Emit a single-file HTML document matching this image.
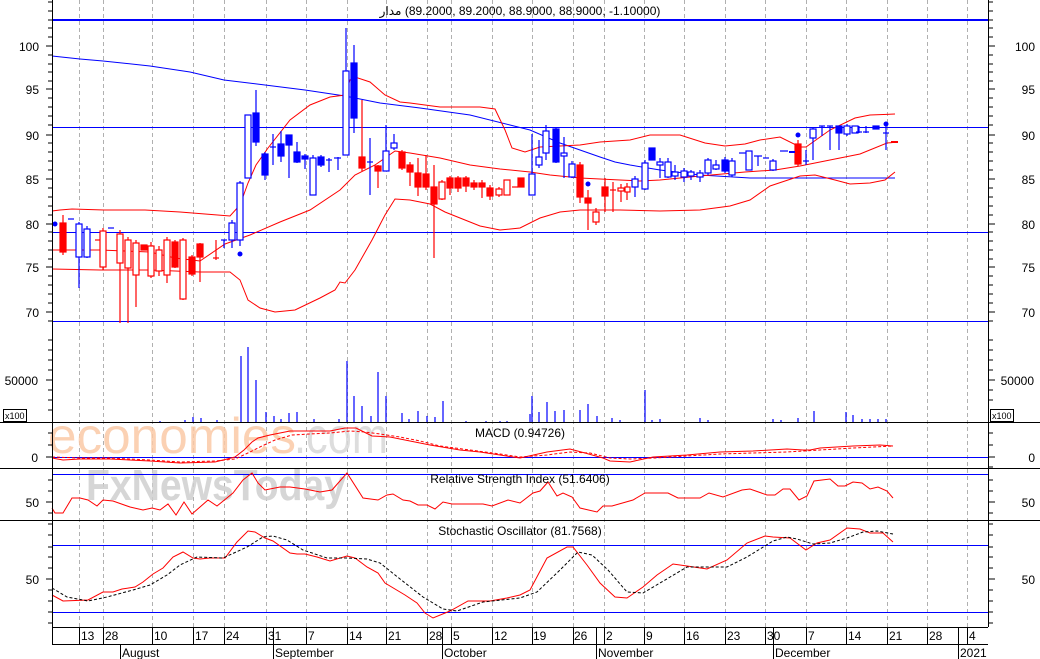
<!DOCTYPE html>
<html><head><meta charset="utf-8"><style>
html,body{margin:0;padding:0;background:#fff;}
svg{display:block;font-family:"Liberation Sans","DejaVu Sans",sans-serif;}
</style></head><body>
<svg width="1040" height="659" viewBox="0 0 1040 659" xmlns="http://www.w3.org/2000/svg">
<rect width="1040" height="659" fill="#fff"/>
<g stroke="#b0b0b0" stroke-dasharray="4,3" stroke-width="1">
<path d="M79.5 0V627M103.5 0V627M152.5 0V627M193.5 0V627M224.5 0V627M266.5 0V627M306.5 0V627M347.5 0V627M386.5 0V627M427.5 0V627M451.5 0V627M492.5 0V627M532.5 0V627M573.5 0V627M604.5 0V627M644.5 0V627M684.5 0V627M725.5 0V627M765.5 0V627M806.5 0V627M846.5 0V627M887.5 0V627M927.5 0V627M967.5 0V627"/>
</g>
<text x="48" y="453" font-size="50" fill="#fbc9a6" opacity="0.85" textLength="248" lengthAdjust="spacingAndGlyphs">economies</text>
<text x="294" y="453" font-size="50" fill="#d8d8d8" opacity="0.85" textLength="94" lengthAdjust="spacingAndGlyphs">.com</text>
<text x="86" y="500" font-size="44" font-weight="bold" fill="#cfcfcf" opacity="0.85" textLength="260" lengthAdjust="spacingAndGlyphs">FxNewsToday</text>
<g stroke="#0000ff" fill="none">
<path d="M52 20H988" stroke-width="2"/>
<path d="M52 127.5H988M52 232.5H988M52 321.5H988M52 457.5H988M52 474.5H988M52 545.5H988M52 612.5H988"/>
</g>
<polyline fill="none" stroke="#0000ff" points="52,56 80,59 103,61 150,66 190,72 224,80 265,85 305,90 345,96 380,103 420,108 470,115 510,125 530,130 560,143 580,150 600,157 615,162 630,165 660,170 700,175 750,178 806,178 850,178 895,178"/>
<g fill="none" stroke="#ff0000">
<polyline points="52,211 60,210 72,209 104,210 145,210 180,212 205,214 230,216 240,205 248,183 256,165 268,148 290,120 310,105 330,97 345,95 350,80 355,77 370,82 385,95 400,102 410,103 440,107 480,107 495,109 505,130 512,148 525,152 540,147 580,145 600,142 630,140 650,135 680,135 705,143 725,146 745,144 760,140 780,137 800,147 806,147 830,130 855,118 870,115 895,114"/>
<polyline points="52,250 100,250 150,252 175,258 200,261 225,244 250,235 280,222 310,210 340,190 355,175 375,165 395,151 410,153 440,158 470,165 500,169 530,172 550,175 580,178 620,180 640,181 660,180 700,176 745,172 775,170 800,166 830,160 860,154 887,143 898,142"/>
<polyline points="52,269 100,270 150,270 200,272 230,272 240,280 248,300 260,308 275,312 295,310 320,298 335,290 340,282 345,283 355,270 372,240 385,215 395,199 410,200 430,204 445,212 465,220 480,226 500,230 520,228 540,218 560,212 580,210 620,210 660,211 700,210 730,206 750,200 770,186 800,176 815,175 835,180 850,184 870,183 885,180 895,172"/>
</g>
<g stroke-width="1.2">
<g stroke="#ff0000" fill="#ff0000">
<line x1="63" y1="215" x2="63" y2="255"/><rect x="60" y="223" width="6" height="29"/>
<line x1="95" y1="240" x2="101" y2="240"/>
<line x1="103" y1="228" x2="103" y2="270"/><rect x="100" y="231" width="6" height="36" fill="#fff"/>
<line x1="120" y1="230" x2="120" y2="323"/><rect x="117" y="234" width="6" height="29" fill="#fff"/>
<line x1="128" y1="237" x2="128" y2="323"/><rect x="125" y="240" width="6" height="28" fill="#fff"/>
<line x1="136" y1="240" x2="136" y2="307"/><rect x="133" y="243" width="6" height="32" fill="#fff"/>
<rect x="141" y="245" width="6" height="5"/>
<line x1="151" y1="242" x2="151" y2="278"/><rect x="148" y="246" width="6" height="30" fill="#fff"/>
<line x1="159" y1="246" x2="159" y2="276"/><rect x="156" y="250" width="6" height="21" fill="#fff"/>
<line x1="167" y1="237" x2="167" y2="283"/><rect x="164" y="240" width="6" height="35" fill="#fff"/>
<line x1="175" y1="240" x2="175" y2="268"/><rect x="172" y="242" width="6" height="25"/>
<line x1="183" y1="238" x2="183" y2="300"/><rect x="180" y="240" width="6" height="59" fill="#fff"/>
<line x1="192" y1="255" x2="192" y2="276"/><rect x="189" y="257" width="6" height="17"/>
<line x1="200" y1="243" x2="200" y2="282"/><rect x="197" y="244" width="6" height="13"/>
<line x1="213" y1="258" x2="219" y2="258"/><line x1="216" y1="240" x2="216" y2="260"/>
<line x1="362" y1="100" x2="362" y2="171"/><rect x="359" y="157" width="6" height="11"/>
<line x1="378" y1="165" x2="378" y2="188"/><rect x="375" y="166" width="6" height="5"/>
<line x1="402" y1="150" x2="402" y2="170"/><rect x="399" y="152" width="6" height="16"/>
<line x1="410" y1="162" x2="410" y2="186"/><rect x="407" y="165" width="6" height="7"/>
<line x1="418" y1="158" x2="418" y2="196"/><rect x="415" y="173" width="6" height="14"/>
<line x1="426" y1="155" x2="426" y2="190"/><rect x="423" y="174" width="6" height="13"/>
<line x1="434" y1="165" x2="434" y2="258"/><rect x="431" y="187" width="6" height="17"/>
<line x1="442" y1="180" x2="442" y2="200"/><rect x="439" y="182" width="6" height="17" fill="#fff"/>
<line x1="450" y1="176" x2="450" y2="195"/><rect x="447" y="178" width="6" height="10"/>
<line x1="458" y1="176" x2="458" y2="192"/><rect x="455" y="178" width="6" height="10"/>
<line x1="466" y1="176" x2="466" y2="192"/><rect x="463" y="178" width="6" height="8"/>
<line x1="474" y1="180" x2="474" y2="190"/><rect x="471" y="183" width="6" height="4"/>
<line x1="482" y1="180" x2="482" y2="198"/><rect x="479" y="183" width="6" height="4"/>
<line x1="490" y1="185" x2="490" y2="200"/><rect x="487" y="188" width="6" height="8"/>
<line x1="499" y1="187" x2="499" y2="197"/><rect x="496" y="189" width="6" height="6" fill="#fff"/>
<rect x="504" y="180" width="6" height="15" fill="#fff"/>
<line x1="512" y1="187" x2="518" y2="187"/>
<rect x="518" y="178" width="6" height="9"/>
<line x1="580" y1="162" x2="580" y2="203"/><rect x="577" y="165" width="6" height="32"/>
<line x1="588" y1="190" x2="588" y2="230"/><rect x="585" y="198" width="6" height="5"/>
<line x1="596" y1="208" x2="596" y2="225"/><rect x="593" y="212" width="6" height="10" fill="#fff"/>
<line x1="605" y1="178" x2="605" y2="212"/><rect x="602" y="187" width="6" height="9"/>
<line x1="613" y1="182" x2="613" y2="212"/><line x1="610" y1="190" x2="616" y2="190"/>
<line x1="621" y1="184" x2="621" y2="202"/><rect x="618" y="188" width="6" height="3" fill="#fff"/>
<line x1="627" y1="183" x2="627" y2="200"/><rect x="625" y="187" width="5" height="5" fill="#fff"/>
<line x1="798" y1="140" x2="798" y2="166"/><rect x="795" y="144" width="6" height="20"/>
<line x1="891" y1="142" x2="898" y2="142" stroke-width="2"/>
</g>
<g stroke="#0000ff" fill="#0000ff">
<line x1="79" y1="222" x2="79" y2="288"/><rect x="76" y="224" width="6" height="33" fill="#fff"/>
<line x1="87" y1="226" x2="87" y2="258"/><rect x="84" y="229" width="6" height="28" fill="#fff"/>
<line x1="68" y1="219" x2="74" y2="219"/><line x1="108" y1="228" x2="114" y2="228"/>
<line x1="224" y1="240" x2="224" y2="248"/><line x1="221" y1="240" x2="227" y2="240"/>
<line x1="232" y1="220" x2="232" y2="248"/><rect x="229" y="223" width="6" height="17" fill="#fff"/>
<line x1="240" y1="181" x2="240" y2="246"/><rect x="237" y="183" width="6" height="57" fill="#fff"/>
<rect x="245" y="115" width="6" height="63" fill="#fff"/>
<line x1="256" y1="90" x2="256" y2="146"/><rect x="253" y="113" width="6" height="29"/>
<line x1="265" y1="152" x2="265" y2="180"/><rect x="262" y="154" width="6" height="21"/>
<line x1="273" y1="134" x2="273" y2="165"/><line x1="270" y1="147" x2="276" y2="147"/>
<line x1="281" y1="131" x2="281" y2="162"/><rect x="278" y="144" width="6" height="12"/>
<line x1="289" y1="135" x2="289" y2="178"/><rect x="286" y="135" width="6" height="10"/>
<line x1="297" y1="142" x2="297" y2="163"/><rect x="294" y="152" width="6" height="10"/>
<line x1="305" y1="154" x2="305" y2="169"/><rect x="302" y="156" width="6" height="3"/>
<line x1="313" y1="155" x2="313" y2="195"/><rect x="310" y="158" width="6" height="37" fill="#fff"/>
<line x1="321" y1="155" x2="321" y2="167"/><rect x="318" y="157" width="6" height="8"/>
<line x1="329" y1="158" x2="329" y2="172"/><line x1="326" y1="160" x2="332" y2="160"/>
<line x1="338" y1="157" x2="338" y2="170"/><line x1="334" y1="158" x2="341" y2="158"/>
<line x1="346" y1="28" x2="346" y2="155"/><rect x="343" y="71" width="6" height="84" fill="#fff"/>
<line x1="354" y1="45" x2="354" y2="133"/><rect x="351" y="63" width="6" height="55"/>
<line x1="370" y1="138" x2="370" y2="195"/><line x1="367" y1="162" x2="373" y2="162"/>
<line x1="386" y1="125" x2="386" y2="171"/><rect x="383" y="151" width="6" height="20" fill="#fff"/>
<line x1="394" y1="134" x2="394" y2="150"/><rect x="391" y="143" width="6" height="5" fill="#fff"/>
<line x1="532" y1="134" x2="532" y2="195"/><rect x="529" y="174" width="6" height="21" fill="#fff"/>
<line x1="539" y1="140" x2="539" y2="168"/><rect x="536" y="157" width="6" height="8" fill="#fff"/>
<line x1="546" y1="125" x2="546" y2="160"/><rect x="543" y="131" width="6" height="22" fill="#fff"/>
<line x1="556" y1="128" x2="556" y2="163"/><rect x="553" y="129" width="6" height="33"/>
<line x1="564" y1="137" x2="564" y2="178"/><rect x="561" y="153" width="6" height="3" fill="#fff"/>
<line x1="572" y1="161" x2="572" y2="178"/><rect x="569" y="164" width="6" height="13" fill="#fff"/>
<line x1="635" y1="176" x2="635" y2="197"/><rect x="632" y="179" width="6" height="8" fill="#fff"/>
<line x1="645" y1="160" x2="645" y2="190"/><rect x="642" y="163" width="6" height="26" fill="#fff"/>
<rect x="649" y="148" width="6" height="12"/>
<line x1="660" y1="158" x2="660" y2="178"/><rect x="657" y="162" width="6" height="3" fill="#fff"/>
<line x1="668" y1="158" x2="668" y2="178"/><rect x="665" y="162" width="6" height="15" fill="#fff"/>
<line x1="675" y1="165" x2="675" y2="180"/><rect x="672" y="172" width="6" height="4" fill="#fff"/>
<line x1="684" y1="168" x2="684" y2="182"/><rect x="681" y="171" width="6" height="6" fill="#fff"/>
<line x1="691" y1="170" x2="691" y2="180"/><rect x="688" y="172" width="6" height="4" fill="#fff"/>
<line x1="700" y1="170" x2="700" y2="182"/><rect x="697" y="173" width="6" height="4" fill="#fff"/>
<line x1="708" y1="158" x2="708" y2="175"/><rect x="705" y="160" width="6" height="13" fill="#fff"/>
<line x1="716" y1="160" x2="716" y2="170"/><rect x="713" y="165" width="6" height="4" fill="#fff"/>
<line x1="725" y1="157" x2="725" y2="173"/><rect x="722" y="160" width="6" height="11"/>
<line x1="732" y1="158" x2="732" y2="177"/><rect x="729" y="161" width="6" height="14" fill="#fff"/>
<line x1="739" y1="153" x2="746" y2="153"/>
<line x1="749" y1="151" x2="749" y2="170"/><rect x="746" y="151" width="6" height="19" fill="#fff"/>
<line x1="758" y1="156" x2="758" y2="166"/><line x1="754" y1="156" x2="762" y2="156"/>
<line x1="763" y1="158" x2="769" y2="158"/>
<line x1="773" y1="159" x2="773" y2="171"/><rect x="770" y="161" width="6" height="9" fill="#fff"/>
<line x1="780" y1="151" x2="788" y2="151"/><line x1="789" y1="152" x2="795" y2="152" stroke-width="2"/>
<line x1="806" y1="150" x2="806" y2="165"/><line x1="803" y1="161" x2="809" y2="161"/>
<line x1="813" y1="128" x2="813" y2="160"/><rect x="810" y="129" width="6" height="9" fill="#fff"/>
<line x1="822" y1="126" x2="822" y2="136"/><line x1="819" y1="126" x2="825" y2="126"/>
<line x1="830" y1="126" x2="830" y2="150"/><line x1="827" y1="126" x2="833" y2="126"/>
<line x1="839" y1="126" x2="839" y2="150"/><rect x="836" y="126" width="6" height="7"/>
<line x1="847" y1="124" x2="847" y2="136"/><rect x="844" y="126" width="6" height="8" fill="#fff"/>
<rect x="852" y="126" width="6" height="7" fill="#fff"/>
<line x1="859" y1="126" x2="859" y2="133"/><line x1="856" y1="132" x2="862" y2="132"/>
<line x1="866" y1="126" x2="866" y2="133"/><line x1="863" y1="132" x2="869" y2="132"/>
<rect x="873" y="126" width="6" height="3"/>
<line x1="886" y1="125" x2="886" y2="150"/><line x1="883" y1="133" x2="889" y2="133"/>
</g>
</g>
<g fill="#0000ff"><circle cx="55" cy="224" r="2.5"/><circle cx="240" cy="254" r="2.5"/><circle cx="588" cy="184" r="2.5"/><circle cx="798" cy="135" r="2.5"/><circle cx="886" cy="124" r="2.5"/></g>
<g stroke="#0000ff" stroke-width="1.2">
<path d="M241 422V356M248 422V347M256 422V380M266 422V412M274 422V416M281 422V419M289 422V413M297 422V412M314 422V419M339 422V419M347 422V361M354 422V396M362 422V406M371 422V416M378 422V372M386 422V396M402 422V413M409 422V419M418 422V411M427 422V416M435 422V417M443 422V401M193 422V417M201 422V418M217 422V420M160 422V421M185 422V420M530 422V414M532 422V396M539 422V412M547 422V402M555 422V411M564 422V410M580 422V410M588 422V404M597 422V416M612 422V418M620 422V420M645 422V390M652 422V420M660 422V419M700 422V418M708 422V420M773 422V419M781 422V420M798 422V418M814 422V411M846 422V412M853 422V415M862 422V419M870 422V419M878 422V419M886 422V419M466 422V421M486 422V421M500 422V421M507 422V421"/>
</g>
<g fill="none" stroke="#ff0000">
<polyline points="52,458 63,460 80,459 110,459 150,461 180,463 215,462 235,457 244,450 252,442 258,438 270,435 290,431 310,431 330,431 345,428 356,428 372,436 390,437 410,441 430,445 460,450 480,452 500,455 520,458 547,452 570,449 585,453 603,458 610,461 630,462 653,457 687,455 720,452 753,451 787,449 803,450 810,450 820,448 853,446 880,445 893,446"/>
<polyline stroke-dasharray="3,2" points="52,457 80,458 110,458 150,460 180,462 215,461 235,459 250,452 262,446 275,440 292,435 310,434 330,433 350,431 365,432 380,434 400,437 420,441 440,446 470,450 500,454 520,457 547,455 570,452 590,453 610,458 630,459 655,458 687,456 720,454 753,453 787,452 820,450 853,448 893,446"/>
</g>
<polyline fill="none" stroke="#ff0000" points="52,508 55,513 63,513 72,498 80,498 88,500 97,506 103,500 113,501 130,507 143,510 152,508 160,510 168,504 176,515 184,502 192,514 208,500 217,506 233,493 243,480 252,473 258,483 265,490 280,487 290,487 305,489 320,492 332,490 347,473 363,498 378,500 387,495 393,494 403,500 410,501 418,505 427,505 435,509 443,502 452,504 467,504 483,504 492,506 508,500 520,503 533,493 540,491 548,482 557,496 563,493 572,497 580,508 597,512 603,506 612,506 633,500 645,493 668,493 678,498 700,498 709,493 723,497 742,490 750,489 767,495 775,495 783,489 790,489 799,500 807,496 814,481 830,479 838,486 845,486 853,482 862,483 870,489 878,487 887,491 893,498"/>
<polyline fill="none" stroke="#ff0000" points="52,595 63,601 88,600 103,592 113,592 122,589 135,587 143,582 153,574 163,568 173,557 183,552 193,558 200,559 210,558 225,558 237,542 248,531 255,532 265,538 273,541 290,553 297,554 305,554 317,557 330,561 347,556 355,558 367,567 378,573 385,583 405,595 417,603 425,613 433,618 450,611 468,601 490,601 507,598 520,595 530,590 547,558 567,547 573,547 587,565 600,583 615,597 627,598 643,587 657,575 673,564 687,566 707,569 727,560 747,543 765,536 773,537 790,538 806,550 817,543 830,540 847,528 860,529 870,533 883,533 893,542"/>
<polyline fill="none" stroke="#000" stroke-dasharray="3,2" points="52,588 67,597 88,601 107,597 133,590 150,585 167,575 180,565 197,557 223,558 247,547 263,537 273,536 287,540 303,550 327,558 347,558 367,559 380,563 395,575 423,597 443,609 457,611 483,602 520,598 537,592 560,570 578,552 592,555 608,570 627,592 643,593 660,583 687,567 727,567 747,557 773,541 787,537 797,539 813,544 830,543 847,538 863,532 877,531 893,534"/>
<g stroke="#000" fill="none">
<path d="M52.5 0V644M988.5 0V627"/>
<path d="M0 422.5H1040M0 468.5H1040M0 520.5H1040M52 627.5H988M52 644.5H988"/>
<path d="M79.5 627V644M103.5 627V644M152.5 627V644M193.5 627V644M224.5 627V644M266.5 627V644M306.5 627V644M347.5 627V644M386.5 627V644M427.5 627V644M451.5 627V644M492.5 627V644M532.5 627V644M573.5 627V644M604.5 627V644M644.5 627V644M684.5 627V644M725.5 627V644M765.5 627V644M806.5 627V644M846.5 627V644M887.5 627V644M927.5 627V644M967.5 627V644"/>
<path d="M120.5 644V659M273.5 627V659M442.5 627V659M596.5 627V659M773.5 627V659M958.5 627V659"/>
<rect x="3.5" y="409.5" width="23" height="12"/><rect x="990.5" y="409.5" width="23" height="12"/>
<path d="M48 2H52M48 11H52M48 20H52M48 28H52M48 37H52M46 46H52M48 55H52M48 64H52M48 72H52M48 81H52M46 89H52M48 98H52M48 107H52M48 116H52M48 125H52M46 135H52M48 143H52M48 152H52M48 161H52M48 170H52M46 179H52M48 188H52M48 197H52M48 206H52M48 215H52M46 224H52M48 232H52M48 241H52M48 250H52M48 259H52M46 267H52M48 276H52M48 285H52M48 294H52M48 303H52M46 312H52M48 321H52M48 340H52M48 350H52M48 360H52M48 370H52M46 380H52M48 390H52M48 400H52M48 410H52M48 433H52M48 445H52M46 457H52M48 480H52M48 491H52M46 502H52M48 513H52M48 524H52M48 535H52M48 547H52M48 557H52M48 568H52M46 579H52M48 590H52M48 601H52M48 612H52M48 623H52"/>
<path d="M988 2H993M988 11H993M988 20H993M988 28H993M988 37H993M988 46H995M988 55H993M988 64H993M988 72H993M988 81H993M988 89H995M988 98H993M988 107H993M988 116H993M988 125H993M988 135H995M988 143H993M988 152H993M988 161H993M988 170H993M988 179H995M988 188H993M988 197H993M988 206H993M988 215H993M988 224H995M988 232H993M988 241H993M988 250H993M988 259H993M988 267H995M988 276H993M988 285H993M988 294H993M988 303H993M988 312H995M988 321H993M988 340H993M988 350H993M988 360H993M988 370H993M988 380H995M988 390H993M988 400H993M988 433H993M988 445H993M988 457H995M988 467H993M988 480H993M988 491H993M988 502H995M988 513H993M988 524H993M988 535H993M988 547H993M988 557H993M988 568H993M988 579H995M988 590H993M988 601H993M988 612H993M988 623H993"/>
</g>
<g font-size="12" fill="#000">
<text x="520" y="15" text-anchor="middle" direction="ltr" unicode-bidi="embed">مدار&#x200E; (89.2000, 89.2000, 88.9000, 88.9000, -1.10000)</text>
<text x="520" y="437" text-anchor="middle">MACD (0.94726)</text>
<text x="520" y="483" text-anchor="middle">Relative Strength Index (51.6406)</text>
<text x="520" y="535" text-anchor="middle">Stochastic Oscillator (81.7568)</text>
<g text-anchor="end">
<text x="39" y="51">100</text><text x="39" y="94">95</text><text x="39" y="140">90</text><text x="39" y="184">85</text><text x="39" y="229">80</text><text x="39" y="272">75</text><text x="39" y="317">70</text><text x="38" y="385">50000</text><text x="38" y="462">0</text><text x="39" y="507">50</text><text x="39" y="584">50</text>
</g>
<g text-anchor="end">
<text x="1035" y="51">100</text><text x="1035" y="94">95</text><text x="1035" y="140">90</text><text x="1035" y="184">85</text><text x="1035" y="229">80</text><text x="1035" y="272">75</text><text x="1035" y="317">70</text><text x="1034" y="385">50000</text><text x="1035" y="462">0</text><text x="1035" y="507">50</text><text x="1035" y="584">50</text>
</g>
<g font-size="9"><text x="5" y="419">x100</text><text x="992" y="419">x100</text></g>
<text x="81" y="640">13</text><text x="105" y="640">28</text><text x="154" y="640">10</text><text x="195" y="640">17</text><text x="226" y="640">24</text><text x="268" y="640">31</text><text x="308" y="640">7</text><text x="349" y="640">14</text><text x="388" y="640">21</text><text x="429" y="640">28</text><text x="453" y="640">5</text><text x="494" y="640">12</text><text x="533" y="640">19</text><text x="574" y="640">26</text><text x="606" y="640">2</text><text x="646" y="640">9</text><text x="686" y="640">16</text><text x="727" y="640">23</text><text x="767" y="640">30</text><text x="808" y="640">7</text><text x="848" y="640">14</text><text x="889" y="640">21</text><text x="929" y="640">28</text><text x="969" y="640">4</text>
<text x="122" y="657">August</text><text x="275" y="657">September</text><text x="444" y="657">October</text><text x="598" y="657">November</text><text x="775" y="657">December</text><text x="960" y="657">2021</text>
</g>
</svg>
</body></html>
